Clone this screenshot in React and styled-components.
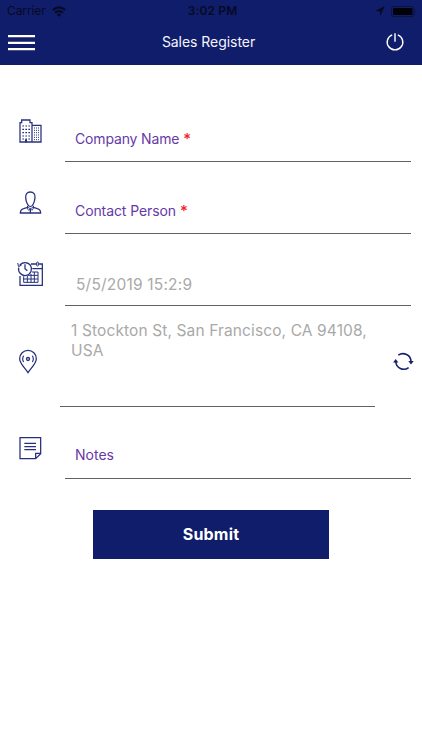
import React from 'react';
import styled, { createGlobalStyle } from 'styled-components';

const NAVY = '#101d6b';
const INK = '#27307d';

const GlobalStyle = createGlobalStyle`
  * { box-sizing: border-box; }
  body { margin: 0; background: #fff; font-family: Inter, "Liberation Sans", sans-serif; }
`;

const Screen = styled.div`
  width: 422px;
  height: 750px;
  overflow: hidden;
  background: #fff;
`;

const Header = styled.header`
  height: 65px;
  background: ${NAVY};
`;

const StatusBar = styled.div`
  display: grid;
  grid-template-columns: 1fr auto 1fr;
  align-items: center;
  height: 22px;
  padding: 0 5px 0 7px;
  color: #060a24;
  line-height: 22px;
`;

const Carrier = styled.div`
  display: flex;
  align-items: center;
  gap: 6px;
  font-size: 12px;
  letter-spacing: -0.1px;
`;

const Clock = styled.div`
  padding-left: 1px;
  font-size: 12px;
  font-weight: 600;
  letter-spacing: 0.15px;
`;

const StatusIcons = styled.div`
  display: flex;
  justify-content: flex-end;
  align-items: center;
  gap: 6px;
`;

const NavBar = styled.div`
  display: grid;
  grid-template-columns: 1fr auto 1fr;
  align-items: center;
  height: 40px;
  padding: 0 17px 0 8px;
`;

const Title = styled.h1`
  margin: 0 0 0 4px;
  color: #f4f5fb;
  font-size: 14px;
  font-weight: 400;
  line-height: 20px;
  letter-spacing: -0.05px;
`;

const IconButton = styled.button`
  display: flex;
  justify-self: ${(p) => p.$side || 'start'};
  padding: 0;
  border: 0;
  background: none;
`;

const Form = styled.form`
  display: flex;
  flex-direction: column;
  padding-top: 25px;
`;

const Row = styled.div`
  display: grid;
  grid-template-columns: ${(p) => (p.$tall ? '60px 315px 1fr' : '65px 346px 1fr')};
  height: ${(p) => (p.$tall ? 101 : 72)}px;
`;

const RowIcon = styled.div`
  padding: ${(p) => (p.$tall ? 41 : 26)}px 0 0 15px;
  svg { display: block; }
`;

const Field = styled.div`
  padding: ${(p) => p.$top || 39}px 0 0 10px;
  border-bottom: 1px solid #626262;
  color: #6639a8;
  font-size: 14px;
  line-height: 20px;
  letter-spacing: ${(p) => p.$spacing || 0}px;
`;

const DateField = styled(Field)`
  padding-top: 41px;
  padding-left: 11px;
  color: #a9a9a9;
  font-size: 15.5px;
  letter-spacing: 0.2px;
`;

const Address = styled(Field)`
  padding: 15px 0 0 11px;
  color: #a9a9a9;
  font-size: 15.5px;
  line-height: 20px;
  letter-spacing: 0.12px;
  white-space: nowrap;
`;

const Required = styled.span`
  margin-left: 4px;
  color: #f3202b;
  font-size: 15px;
  font-weight: 500;
  line-height: 1;
`;

const RefreshCell = styled.div`
  padding: 44px 0 0 16px;
`;

const Submit = styled.button`
  width: 236px;
  height: 49px;
  margin: 31px 0 0 93px;
  padding: 0 0 1px;
  border: 0;
  background: ${NAVY};
  color: #fff;
  font-family: inherit;
  font-size: 16px;
  font-weight: 700;
  letter-spacing: 0.2px;
`;

function LineIcon({ top, children }) {
  return (
    <svg width="30" height="30" viewBox={`15 ${top} 90 90`} fill="none" stroke={INK} strokeWidth="3.8">
      {children}
    </svg>
  );
}

const BuildingIcon = () => (
  <LineIcon top={18}>
    <path d="M30 96V38h5v-8h25v8h6v58M66 46h27v50M28 96h67" />
    <path d="M37 48h24M37 58h24M37 68h24M37 78h24M37 87h24" strokeDasharray="5 4" strokeWidth="3.6" />
    <path d="M72 54h18M72 61h18M72 68h18M72 75h18M72 82h18M72 89h18" strokeDasharray="3 3" strokeWidth="3" />
    <path d="M48 88v9" strokeWidth="6" />
  </LineIcon>
);

const PersonIcon = () => (
  <LineIcon top={24}>
    <path d="M61 36c-10 0-15 7-14 17 1 13 7 27 14 27s13-14 14-27c1-10-4-17-14-17Z" />
    <path d="M53 77v5l-12 4c-7 2-10 7-10 13h61c0-6-3-11-10-13l-12-4v-5" />
    <path d="M53 82l8 4-5 5-5-7M70 82l-9 4 5 5 5-7" strokeWidth="2.6" />
    <path d="M61 87v12" strokeWidth="4" />
  </LineIcon>
);

const CalendarIcon = () => (
  <LineIcon top={30}>
    <path d="M30 78v28h67V42H86M79 42H63M67 56h30" />
    <rect x="80" y="36" width="5" height="12" rx="2" strokeWidth="3" />
    <path d="M29 46A19.5 19.5 0 1 1 26 53M45 43v13l7 6" />
    <path d="M23 39l3 11 9-5" strokeWidth="3" />
    <path d="M41 79v18h43V66H66M52 78v19M63 72v25M73 66v31M39 87h45M54 76h30" strokeWidth="3" />
  </LineIcon>
);

const PinIcon = () => (
  <LineIcon top={36}>
    <path d="M54 113C45 99 29 85 29 71a25 25 0 0 1 50 0c0 14-16 28-25 42Z" />
    <circle cx="54" cy="72" r="4.5" strokeWidth="4" />
    <path d="M41 62q-6 10 0 19M67 62q6 10 0 19" strokeWidth="3.4" />
  </LineIcon>
);

const NoteIcon = () => (
  <LineIcon top={24}>
    <path d="M30 38h62v48L77 101H30ZM92 85H77v16M43 55h35M43 65h35M43 74h35" />
  </LineIcon>
);

const RefreshIcon = () => (
  <svg width="24" height="24" viewBox="0 0 24 24" fill="none" stroke="#17206c" strokeWidth="1.6">
    <path d="M7.3 5.2A8 8 0 0 1 20 11.5M4.8 11.5a8 8 0 0 0 12.8 6.1" />
    <path d="M17.3 11h5.4l-2.7 3.6ZM2 12.5h5.4L4.7 9Z" fill="#17206c" stroke="none" />
  </svg>
);

const WifiIcon = () => (
  <svg width="14" height="11" viewBox="0 0 14 11" fill="none" stroke="#060a24" strokeWidth="2.2">
    <path d="M.8 4q6.2-5.4 12.4 0M3.1 6.7q3.9-3.3 7.8 0" />
    <path d="M4.8 8.5q2.2-1.8 4.4 0L7 10.8Z" fill="#060a24" stroke="none" />
  </svg>
);

const LocationIcon = () => (
  <svg width="10" height="10" viewBox="0 0 10 10" fill="#060a24">
    <path d="M9.7.3 0 5l4.8.3.3 4.7Z" />
  </svg>
);

const BatteryIcon = () => (
  <svg width="26" height="11" viewBox="0 0 26 11">
    <rect x=".5" y=".5" width="22.5" height="10" rx="2" fill="none" stroke="#0b133f" />
    <rect x="2" y="2" width="19.5" height="7" rx="1" fill="#010208" />
    <path d="M24.2 3.7q1.5 1.8 0 3.6Z" fill="#0b133f" />
  </svg>
);

const MenuIcon = () => (
  <svg width="27" height="18" viewBox="0 0 27 18" fill="none" stroke="#fff" strokeWidth="2.2">
    <path d="M0 3.2h27M0 9.8h27M0 16.2h27" />
  </svg>
);

const PowerIcon = () => (
  <svg width="20" height="20" viewBox="0 0 20 20" fill="none" stroke="#fff" strokeWidth="1.4">
    <path d="M7.2 2.8a7.8 7.8 0 1 0 5.6 0M10 1.2v8.6" />
  </svg>
);

export default function App() {
  return (
    <Screen>
      <GlobalStyle />
      <Header>
        <StatusBar>
          <Carrier>Carrier<WifiIcon /></Carrier>
          <Clock>3:02 PM</Clock>
          <StatusIcons><LocationIcon /><BatteryIcon /></StatusIcons>
        </StatusBar>
        <NavBar>
          <IconButton type="button" aria-label="Menu"><MenuIcon /></IconButton>
          <Title>Sales Register</Title>
          <IconButton type="button" aria-label="Log out" $side="end"><PowerIcon /></IconButton>
        </NavBar>
      </Header>
      <Form>
        <Row>
          <RowIcon><BuildingIcon /></RowIcon>
          <Field $spacing={-0.16}>Company Name<Required>*</Required></Field>
        </Row>
        <Row>
          <RowIcon><PersonIcon /></RowIcon>
          <Field $spacing={-0.09}>Contact Person<Required>*</Required></Field>
        </Row>
        <Row>
          <RowIcon><CalendarIcon /></RowIcon>
          <DateField>5/5/2019 15:2:9</DateField>
        </Row>
        <Row $tall>
          <RowIcon $tall><PinIcon /></RowIcon>
          <Address>1 Stockton St, San Francisco, CA 94108,<br />USA</Address>
          <RefreshCell>
            <IconButton type="button" aria-label="Refresh location"><RefreshIcon /></IconButton>
          </RefreshCell>
        </Row>
        <Row>
          <RowIcon><NoteIcon /></RowIcon>
          <Field $top={38}>Notes</Field>
        </Row>
        <Submit type="button">Submit</Submit>
      </Form>
    </Screen>
  );
}
